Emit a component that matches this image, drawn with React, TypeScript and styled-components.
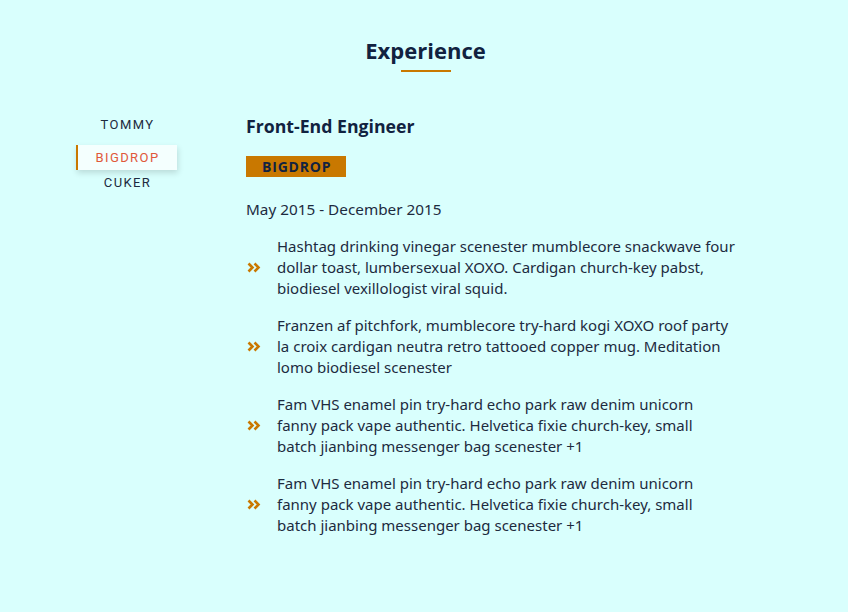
import styled, { createGlobalStyle } from "styled-components";

const GlobalStyle = createGlobalStyle`
	html, body {
		margin: 0;
		padding: 0;
		background: #d9fffd;
	}
	body {
		font-family: "Noto Sans", "Open Sans", sans-serif;
		color: #1d2b3f;
	}
`;

const jobs = [
	{ id: "tommy", name: "TOMMY" },
	{ id: "bigdrop", name: "BIGDROP" },
	{ id: "cuker", name: "CUKER" },
];

const duties = [
	"Hashtag drinking vinegar scenester mumblecore snackwave four dollar toast, lumbersexual XOXO. Cardigan church-key pabst, biodiesel vexillologist viral squid.",
	"Franzen af pitchfork, mumblecore try-hard kogi XOXO roof party la croix cardigan neutra retro tattooed copper mug. Meditation lomo biodiesel scenester",
	"Fam VHS enamel pin try-hard echo park raw denim unicorn fanny pack vape authentic. Helvetica fixie church-key, small batch jianbing messenger bag scenester +1",
	"Fam VHS enamel pin try-hard echo park raw denim unicorn fanny pack vape authentic. Helvetica fixie church-key, small batch jianbing messenger bag scenester +1",
];

function Chevrons() {
	return (
		<svg width="14" height="11" viewBox="0 0 14 11" fill="none">
			<path d="M1.5 1.5 L5.5 5.5 L1.5 9.5" stroke="#c97800" strokeWidth="2.6" />
			<path d="M7.5 1.5 L11.5 5.5 L7.5 9.5" stroke="#c97800" strokeWidth="2.6" />
		</svg>
	);
}

export default function App() {
	const active = "bigdrop";
	return (
		<>
			<GlobalStyle />
			<Section>
				<Title>
					<h2>Experience</h2>
					<Underline />
				</Title>
				<Center>
					<Tabs>
						{jobs.map((job) => (
							<TabButton key={job.id} $active={job.id === active}>
								{job.name}
							</TabButton>
						))}
					</Tabs>
					<Info>
						<JobTitle>Front-End Engineer</JobTitle>
						<Company>BIGDROP</Company>
						<Dates>May 2015 - December 2015</Dates>
						<Duties>
							{duties.map((text, i) => (
								<Duty key={i}>
									<Chevrons />
									<p>{text}</p>
								</Duty>
							))}
						</Duties>
					</Info>
				</Center>
			</Section>
		</>
	);
}

const Section = styled.section`
	padding-top: 35px;
	min-height: 612px;
	box-sizing: border-box;
`;

const Title = styled.div`
	display: flex;
	flex-direction: column;
	align-items: center;

	& h2 {
		margin: 0 0 0 3px;
		font-family: "Open Sans", sans-serif;
		font-size: 22px;
		font-weight: 700;
		line-height: 30px;
		color: #112240;
	}
`;

const Underline = styled.div`
	width: 50px;
	height: 2px;
	margin-top: 5px;
	margin-left: 4px;
	background: #c97800;
`;

const Center = styled.div`
	display: flex;
	align-items: flex-start;
	margin-top: 40px;
	padding-left: 76px;
`;

const Tabs = styled.div`
	display: flex;
	flex-direction: column;
	width: 101px;
	margin-right: 69px;
`;

const TabButton = styled.button<{ $active: boolean }>`
	height: 25px;
	margin-top: ${(p) => (p.$active ? "8px" : "0")};
	padding: 0;
	border: none;
	border-left: 2px solid ${(p) => (p.$active ? "#c97800" : "transparent")};
	background: ${(p) => (p.$active ? "#f4fffe" : "transparent")};
	box-shadow: ${(p) => (p.$active ? "1px 3px 6px rgba(0, 0, 0, 0.14)" : "none")};
	font-family: Roboto, "Liberation Sans", sans-serif;
	font-size: 13px;
	letter-spacing: 1.4px;
	color: ${(p) => (p.$active ? "#e0583a" : "#1d2b3f")};
	cursor: pointer;
`;

const Info = styled.article`
	width: 490px;
	padding-top: 2px;
`;

const JobTitle = styled.h3`
	margin: 0;
	font-family: "Open Sans", sans-serif;
	font-size: 17.7px;
	font-weight: 700;
	line-height: 24px;
	color: #112240;
`;

const Company = styled.h4`
	display: inline-block;
	margin: 18px 0 0;
	padding: 0 16px;
	width: 100px;
	box-sizing: border-box;
	background: #c97800;
	font-family: "Open Sans", sans-serif;
	font-size: 14px;
	font-weight: 700;
	line-height: 21px;
	letter-spacing: 0.8px;
	color: #112240;
`;

const Dates = styled.p`
	margin: 21px 0 0;
	font-size: 15.3px;
	line-height: 22px;
	color: #1d2b3f;
`;

const Duties = styled.div`
	display: flex;
	flex-direction: column;
	gap: 16px;
	margin-top: 16px;
`;

const Duty = styled.div`
	display: flex;
	align-items: center;
	gap: 16px;
	padding-left: 1px;

	& svg {
		flex-shrink: 0;
	}

	& p {
		margin: 0;
		width: 458.6px;
		font-size: 15px;
		line-height: 21px;
		color: #1d2b3f;
	}
`;
